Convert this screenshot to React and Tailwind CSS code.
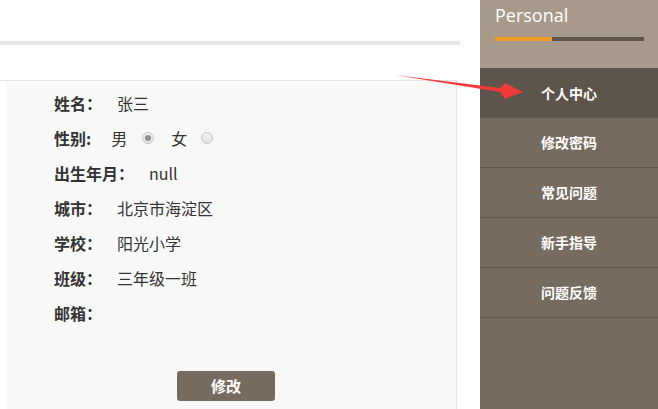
import React from 'react'

const font = { fontFamily: '"Microsoft YaHei", "Noto Sans CJK SC", "Noto Sans", sans-serif' }

const rows = [
  { label: '姓名：', value: '张三' },
  { label: '性别', gender: true },
  { label: '出生年月：', value: 'null' },
  { label: '城市：', value: '北京市海淀区' },
  { label: '学校：', value: '阳光小学' },
  { label: '班级：', value: '三年级一班' },
  { label: '邮箱：', value: '' },
]

const menu = ['个人中心', '修改密码', '常见问题', '新手指导', '问题反馈']

const Radio = ({ checked }) => (
  <span className="inline-flex items-center justify-center w-[12px] h-[12px] rounded-full border border-[#c8c8c8] bg-gradient-to-b from-[#f2f2f2] to-[#e2e2e2]">
    {checked && <span className="w-[6px] h-[6px] rounded-full bg-[#8f8f8f]" />}
  </span>
)

export default function App() {
  return (
    <div className="relative w-[658px] h-[409px] flex overflow-hidden bg-white text-[#333]" style={font}>
      {/* main column */}
      <div className="w-[480px] flex flex-col">
        <div className="h-[41px]" />
        <div className="h-[4px] w-[460px] bg-[#e6e6e6]" />
        <div className="h-[35px]" />
        <div className="w-[457px] h-px bg-[#e3e3e3]" />
        <div className="ml-[7px] w-[450px] flex-1 bg-[#f8f8f8] border-r border-[#e8e8e8] pt-[4px] pl-[47px]">
          {rows.map((r) => (
            <div key={r.label} className="h-[35px] flex items-center text-[16px]">
              {r.gender ? (
                <>
                  <span className="font-bold">性别:</span>
                  <span className="ml-[20px]">男</span>
                  <span className="ml-[15px] flex"><Radio checked /></span>
                  <span className="ml-[17px]">女</span>
                  <span className="ml-[14px] flex"><Radio /></span>
                </>
              ) : (
                <>
                  <span className="font-bold">{r.label}</span>
                  <span className="ml-[15px]">{r.value}</span>
                </>
              )}
            </div>
          ))}
          <button className="mt-[41px] ml-[123px] w-[98px] h-[30px] rounded-[3px] bg-[#776b5f] text-white text-[15px] font-bold">
            修改
          </button>
        </div>
      </div>

      {/* sidebar */}
      <div className="w-[178px] bg-[#766b5f] flex flex-col">
        <div className="h-[68px] bg-[#a89a8b] pl-[15px] pt-[3px]">
          <div className="text-white text-[18px] leading-[24px] font-medium" style={{ fontFamily: '"Segoe UI", "Open Sans", "Noto Sans", sans-serif' }}>Personal</div>
          <div className="mt-[10px] w-[149px] h-[4px] bg-[#5d544a] flex">
            <div className="w-[57px] h-full bg-[#f39a2b]" />
          </div>
        </div>
        {menu.map((m, i) => (
          <div
            key={m}
            className={
              i === 0
                ? 'h-[50px] flex items-center justify-center bg-[#5d554b] text-white text-[14px] font-semibold'
                : 'h-[50px] flex items-center justify-center border-b border-[#5f574d] text-white text-[14px] font-semibold'
            }
          >
            {m}
          </div>
        ))}
      </div>

      {/* red pointer arrow */}
      <svg className="absolute left-[390px] top-[70px] pointer-events-none" width="140" height="35" viewBox="0 0 140 35">
        <polygon points="5,5 110,18 115,13 133,22 115,29 110,22" fill="#f23a3a" />
      </svg>
    </div>
  )
}
